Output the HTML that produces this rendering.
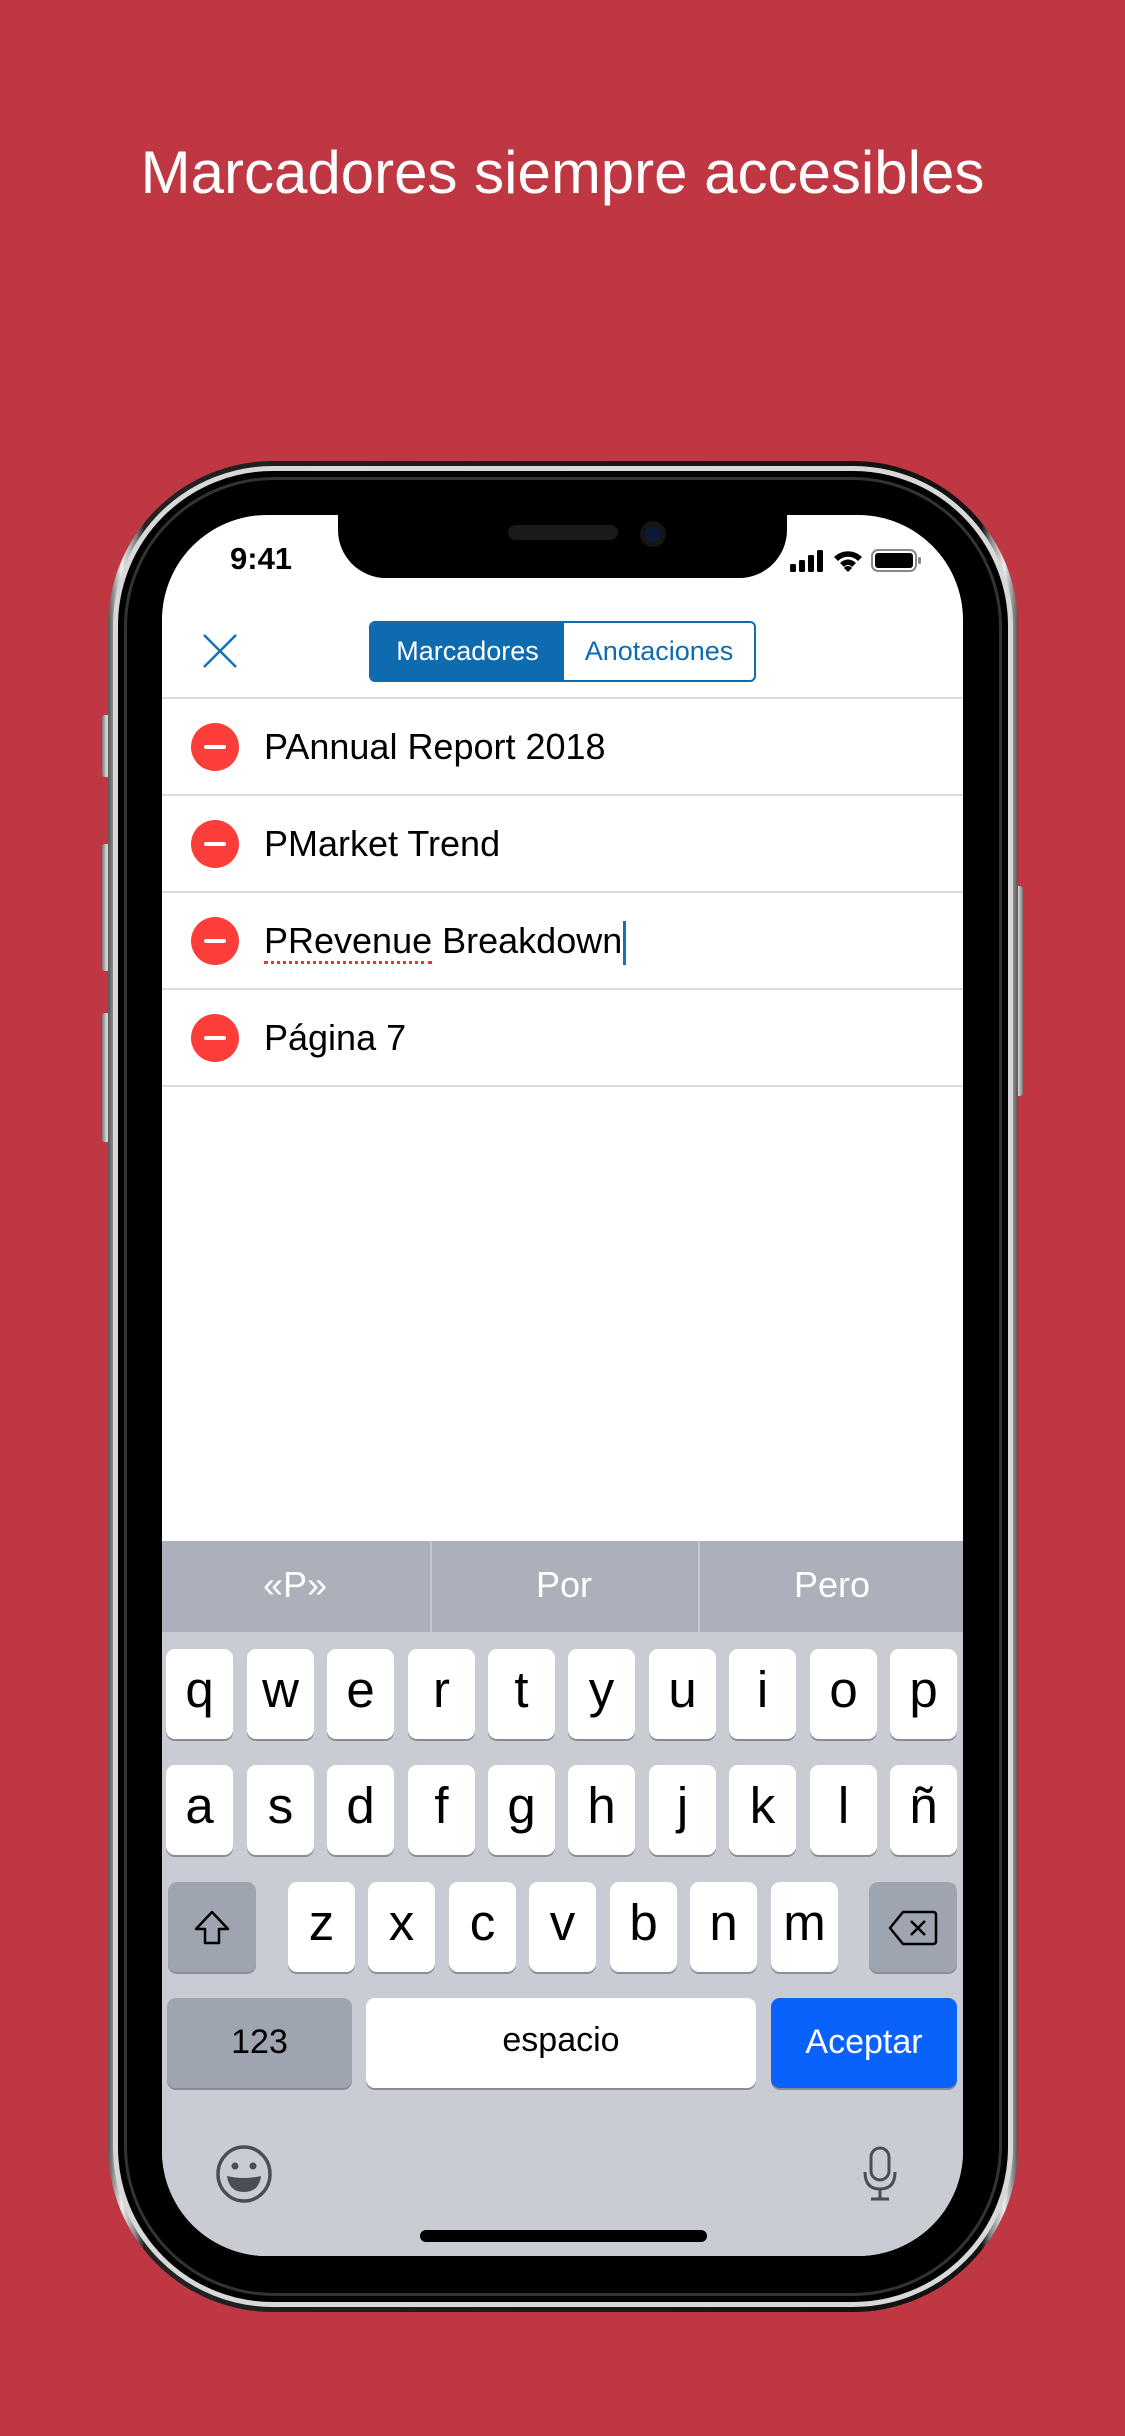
<!DOCTYPE html>
<html><head><meta charset="utf-8"><style>
*{margin:0;padding:0;box-sizing:border-box}
body{width:1125px;height:2436px;background:#BE3742;position:relative;overflow:hidden;font-family:"Liberation Sans",Arial,sans-serif}
.abs{position:absolute}
.title{left:0;width:1125px;top:137px;text-align:center;color:#fff;font-size:60px;line-height:72px}
.body{left:108px;top:461px;width:910px;height:1851px;border-radius:165px;background:linear-gradient(90deg,#555,#eee 1.5%,#888 3%,#222 4%,#111 96%,#888 97%,#eee 98.5%,#555);}
.body2{left:113px;top:466px;width:900px;height:1841px;border-radius:160px;border:5px solid #d8d8d8;background:#000}
.bezel{left:124px;top:477px;width:878px;height:1819px;border-radius:150px;background:#000;border:3px solid #333}
.screen{left:162px;top:515px;width:801px;height:1741px;border-radius:105px;background:#fff;overflow:hidden}
.notch{left:176px;top:-2px;width:449px;height:65px;background:#000;border-radius:0 0 48px 48px}
.btn{background:linear-gradient(90deg,#777,#ddd,#777);border-radius:3px}
.row{left:0;width:801px;height:97px;border-bottom:2px solid #dcdcdc}
.minus{left:29px;width:48px;height:48px;border-radius:50%;background:#FC3D39;top:24px}
.minus:after{content:"";position:absolute;left:13px;top:22px;width:22px;height:4px;background:#fff;border-radius:2px}
.rt{left:102px;top:26px;font-size:36px;color:#000;line-height:44px}
.kb{left:0;top:1026px;width:801px;height:715px;background:#C9CCD3}
.sug{left:0;top:0;width:801px;height:91px;background:#ABB0BA}
.sug div{position:absolute;top:0;height:91px;line-height:88px;text-align:center;color:#fff;font-size:36px;width:266px}
.k{position:absolute;width:67px;height:90px;background:#fff;border-radius:9px;box-shadow:0 2px 0 #888d96;text-align:center;font-size:51px;line-height:82px;color:#000}
.g{background:#9EA5B0}
</style></head><body>
<div class="abs title">Marcadores siempre accesibles</div>
<div class="abs btn" style="left:102px;top:715px;width:10px;height:62px"></div>
<div class="abs btn" style="left:102px;top:844px;width:10px;height:127px"></div>
<div class="abs btn" style="left:102px;top:1013px;width:10px;height:129px"></div>
<div class="abs btn" style="left:1013px;top:886px;width:10px;height:210px"></div>
<div class="abs body"></div>
<div class="abs body2"></div>
<div class="abs bezel"></div>
<div class="abs screen">
 <div class="abs notch"><div class="abs" style="left:170px;top:12px;width:110px;height:15px;border-radius:8px;background:#1a1a1a"></div><div class="abs" style="left:302px;top:8px;width:26px;height:26px;border-radius:50%;background:#0b1a3a;border:5px solid #151515"></div></div>
 <div class="abs" style="left:68px;top:26px;font-size:31px;font-weight:bold">9:41</div>
 <svg class="abs" style="left:628px;top:32px" width="150" height="26" viewBox="0 0 150 26">
  <rect x="0" y="17" width="6" height="8" rx="1.5"/><rect x="9" y="13" width="6" height="12" rx="1.5"/><rect x="18" y="8" width="6" height="17" rx="1.5"/><rect x="27" y="3" width="6" height="22" rx="1.5"/>
  <path d="M44 10 A20 20 0 0 1 72 10 L68 14 A14 14 0 0 0 48 14Z M50 16 A11 11 0 0 1 66 16 L62 20 A5 5 0 0 0 54 20Z M58 25 L54 21 A5 5 0 0 1 62 21Z"/>
  <rect x="82" y="3" width="44" height="21" rx="6" fill="none" stroke="#888" stroke-width="2"/><rect x="85" y="6" width="38" height="15" rx="3"/><rect x="128" y="10" width="3" height="7" rx="1" fill="#888"/>
 </svg>
 <svg class="abs" style="left:39px;top:117px" width="38" height="38"><path d="M3 3L35 35M35 3L3 35" stroke="#1570B8" stroke-width="2.5"/></svg>
 <div class="abs" style="left:207px;top:106px;width:387px;height:61px;border:2px solid #0E6BB0;border-radius:6px;overflow:hidden">
  <div class="abs" style="left:0;top:0;width:193px;height:57px;background:#0E6BB0;color:#fff;font-size:27px;line-height:57px;text-align:center">Marcadores</div>
  <div class="abs" style="left:193px;top:0;width:190px;height:57px;color:#0E6BB0;font-size:27px;line-height:57px;text-align:center">Anotaciones</div>
 </div>
 <div class="abs" style="left:0;top:182px;width:801px;height:2px;background:#dcdcdc"></div>
 <div class="abs row" style="top:184px"><div class="abs minus"></div><div class="abs rt">PAnnual Report 2018</div></div>
 <div class="abs row" style="top:281px"><div class="abs minus"></div><div class="abs rt">PMarket Trend</div></div>
 <div class="abs row" style="top:378px"><div class="abs minus"></div><div class="abs rt"><span style="border-bottom:3px dotted #e33">PRevenue</span> Breakdown<span style="display:inline-block;width:3px;height:44px;background:#1570B8;vertical-align:middle;margin-left:1px"></span></div></div>
 <div class="abs row" style="top:475px"><div class="abs minus"></div><div class="abs rt">Página 7</div></div>
 <div class="abs kb">
  <div class="abs sug"><div style="left:0">«P»</div><div style="left:268px;border-left:2px solid #c5c8ce">Por</div><div style="left:536px;border-left:2px solid #c5c8ce">Pero</div></div>
  <div class="k" style="left:4px;top:108px">q</div><div class="k" style="left:85px;top:108px">w</div><div class="k" style="left:165px;top:108px">e</div><div class="k" style="left:246px;top:108px">r</div><div class="k" style="left:326px;top:108px">t</div><div class="k" style="left:406px;top:108px">y</div><div class="k" style="left:487px;top:108px">u</div><div class="k" style="left:567px;top:108px">i</div><div class="k" style="left:648px;top:108px">o</div><div class="k" style="left:728px;top:108px">p</div>
  <div class="k" style="left:4px;top:224px">a</div><div class="k" style="left:85px;top:224px">s</div><div class="k" style="left:165px;top:224px">d</div><div class="k" style="left:246px;top:224px">f</div><div class="k" style="left:326px;top:224px">g</div><div class="k" style="left:406px;top:224px">h</div><div class="k" style="left:487px;top:224px">j</div><div class="k" style="left:567px;top:224px">k</div><div class="k" style="left:648px;top:224px">l</div><div class="k" style="left:728px;top:224px">ñ</div>
  <div class="k g" style="left:6px;top:341px;width:88px"><svg width="40" height="40" style="margin-top:26px" viewBox="0 0 40 40"><path d="M20 4L4 21H13V35H27V21H36Z" fill="none" stroke="#000" stroke-width="2.5" stroke-linejoin="round"/></svg></div>
  <div class="k" style="left:126px;top:341px">z</div><div class="k" style="left:206px;top:341px">x</div><div class="k" style="left:287px;top:341px">c</div><div class="k" style="left:367px;top:341px">v</div><div class="k" style="left:448px;top:341px">b</div><div class="k" style="left:528px;top:341px">n</div><div class="k" style="left:609px;top:341px">m</div>
  <div class="k g" style="left:707px;top:341px;width:88px"><svg width="52" height="40" style="margin-top:26px" viewBox="0 0 52 40"><path d="M16 4H46Q49 4 49 7V33Q49 36 46 36H16L3 20Z" fill="none" stroke="#000" stroke-width="2.5" stroke-linejoin="round"/><path d="M24 13L38 27M38 13L24 27" stroke="#000" stroke-width="2.5"/></svg></div>
  <div class="k g" style="left:5px;top:457px;width:185px;font-size:34px;line-height:88px">123</div>
  <div class="k" style="left:204px;top:457px;width:390px;font-size:34px;line-height:84px">espacio</div>
  <div class="k" style="left:609px;top:457px;width:186px;background:#0A62FD;color:#fff;font-size:34px;line-height:88px">Aceptar</div>
  <svg class="abs" style="left:53px;top:603px" width="58" height="60" viewBox="0 0 58 60"><ellipse cx="29" cy="30" rx="26" ry="27" fill="none" stroke="#4a4d54" stroke-width="3.5"/><circle cx="20" cy="22" r="3.5" fill="#4a4d54"/><circle cx="38" cy="22" r="3.5" fill="#4a4d54"/><path d="M12 32Q29 36 46 32Q44 48 29 48Q14 48 12 32Z" fill="#4a4d54"/></svg>
  <svg class="abs" style="left:700px;top:605px" width="36" height="56" viewBox="0 0 36 56"><rect x="9" y="2" width="18" height="32" rx="9" fill="none" stroke="#4a4d54" stroke-width="3"/><path d="M3 26Q3 43 18 43Q33 43 33 26M18 43V52M9 53H27" fill="none" stroke="#4a4d54" stroke-width="3"/></svg>
  <div class="abs" style="left:258px;top:689px;width:287px;height:12px;border-radius:6px;background:#000"></div>
 </div>
</div>
</body></html>
